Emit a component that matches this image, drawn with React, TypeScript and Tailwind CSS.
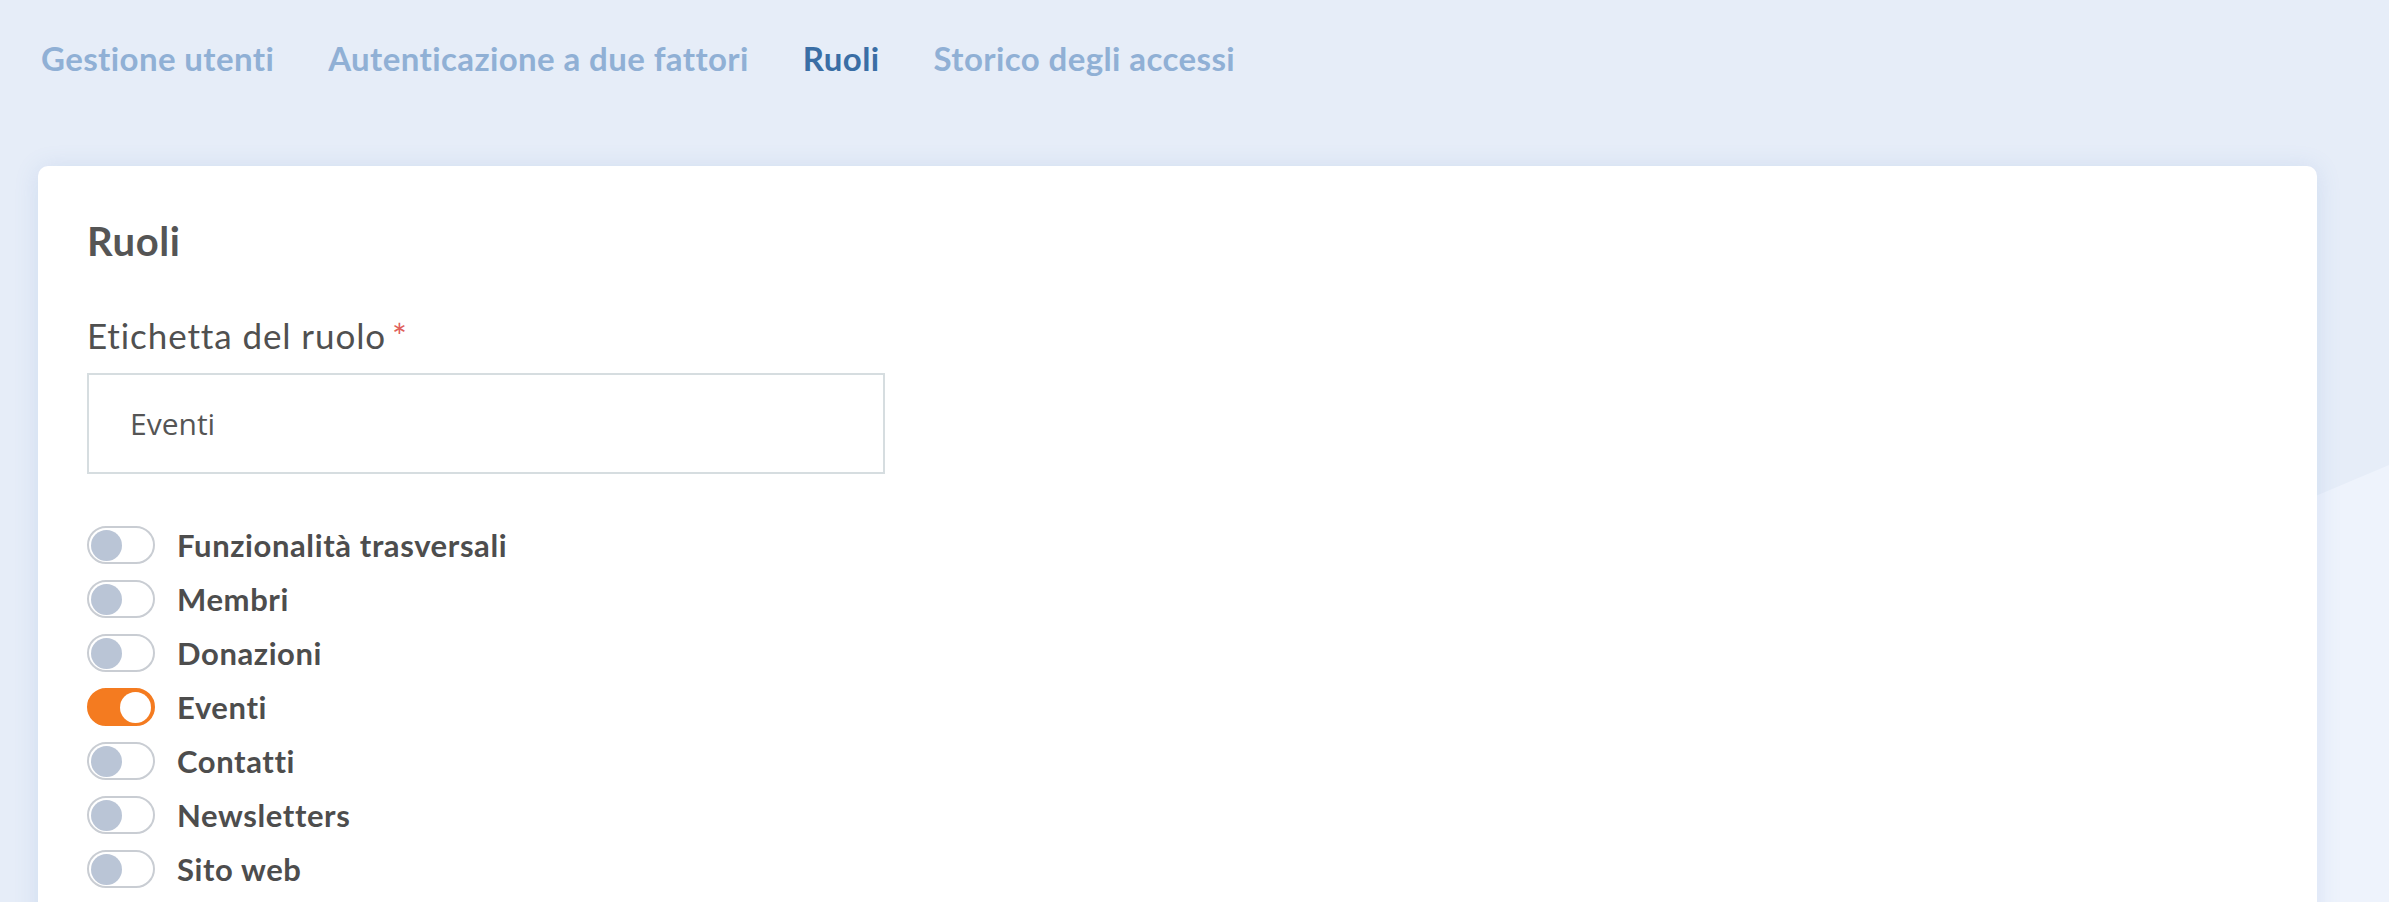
import React from 'react'

const tabs = [
  { label: 'Gestione utenti', active: false },
  { label: 'Autenticazione a due fattori', active: false },
  { label: 'Ruoli', active: true },
  { label: 'Storico degli accessi', active: false },
]

const permissions = [
  { label: 'Funzionalità trasversali', on: false },
  { label: 'Membri', on: false },
  { label: 'Donazioni', on: false },
  { label: 'Eventi', on: true },
  { label: 'Contatti', on: false },
  { label: 'Newsletters', on: false },
  { label: 'Sito web', on: false },
]

export const Toggle = ({ on }: { on: boolean }) => {
  return (
    <div
      className={
        on
          ? 'w-[68px] h-[38px] rounded-full bg-[#f47b20] border-2 border-[#f47b20] flex items-center justify-end px-[2px]'
          : 'w-[68px] h-[38px] rounded-full bg-white border-2 border-[#c9cdd3] flex items-center justify-start px-[2px]'
      }
    >
      <div
        className={
          on
            ? 'w-[31px] h-[31px] rounded-full bg-white'
            : 'w-[31px] h-[31px] rounded-full bg-[#bac5d6]'
        }
      ></div>
    </div>
  )
}

export default function App() {
  return (
    <div className="relative min-h-[902px] w-full overflow-hidden bg-[#e6edf8] font-['Lato',sans-serif]">
      <svg
        className="absolute left-0 top-0 w-full h-[902px]"
        viewBox="0 0 2389 902"
        preserveAspectRatio="none"
      >
        <polygon points="0,1474 2389,465 2389,902 0,902" fill="#eef3fc" />
      </svg>

      <div className="relative pl-[38px] pr-[72px]">
        <nav className="flex gap-[54px] pl-[3px] pt-[39px] h-[166px]">
          {tabs.map((t) => (
            <span
              key={t.label}
              className={
                t.active
                  ? 'text-[33px] leading-[38px] tracking-[0.4px] font-bold text-[#3a6ea5]'
                  : 'text-[33px] leading-[38px] tracking-[0.4px] font-bold text-[#90b0d5]'
              }
            >
              {t.label}
            </span>
          ))}
        </nav>

        <div className="rounded-[10px] bg-white pl-[49px] pt-[56px] pb-[60px] shadow-[0_2px_24px_rgba(90,130,200,0.16)]">
          <h1 className="text-[40px] leading-[38px] tracking-[0.6px] font-bold text-[#555555] m-0">
            Ruoli
          </h1>

          <label className="block mt-[56px] text-[35px] leading-[38px] tracking-[0.9px] text-[#505050]">
            Etichetta del ruolo
            <span className="text-[#e0605a] ml-[6px]">*</span>
          </label>

          <div className="mt-[19px] w-[798px] h-[101px] border-2 border-[#d6dde0] flex items-center pl-[41px]">
            <span className="font-['Open_Sans',sans-serif] text-[30px] text-[#555555]">
              Eventi
            </span>
          </div>

          <div className="mt-[44px] flex flex-col">
            {permissions.map((p) => (
              <div key={p.label} className="h-[54px] flex items-center gap-[22px]">
                <Toggle on={p.on} />
                <span className="text-[31px] tracking-[0.6px] font-bold text-[#4d4d4d]">
                  {p.label}
                </span>
              </div>
            ))}
          </div>
        </div>
      </div>
    </div>
  )
}
